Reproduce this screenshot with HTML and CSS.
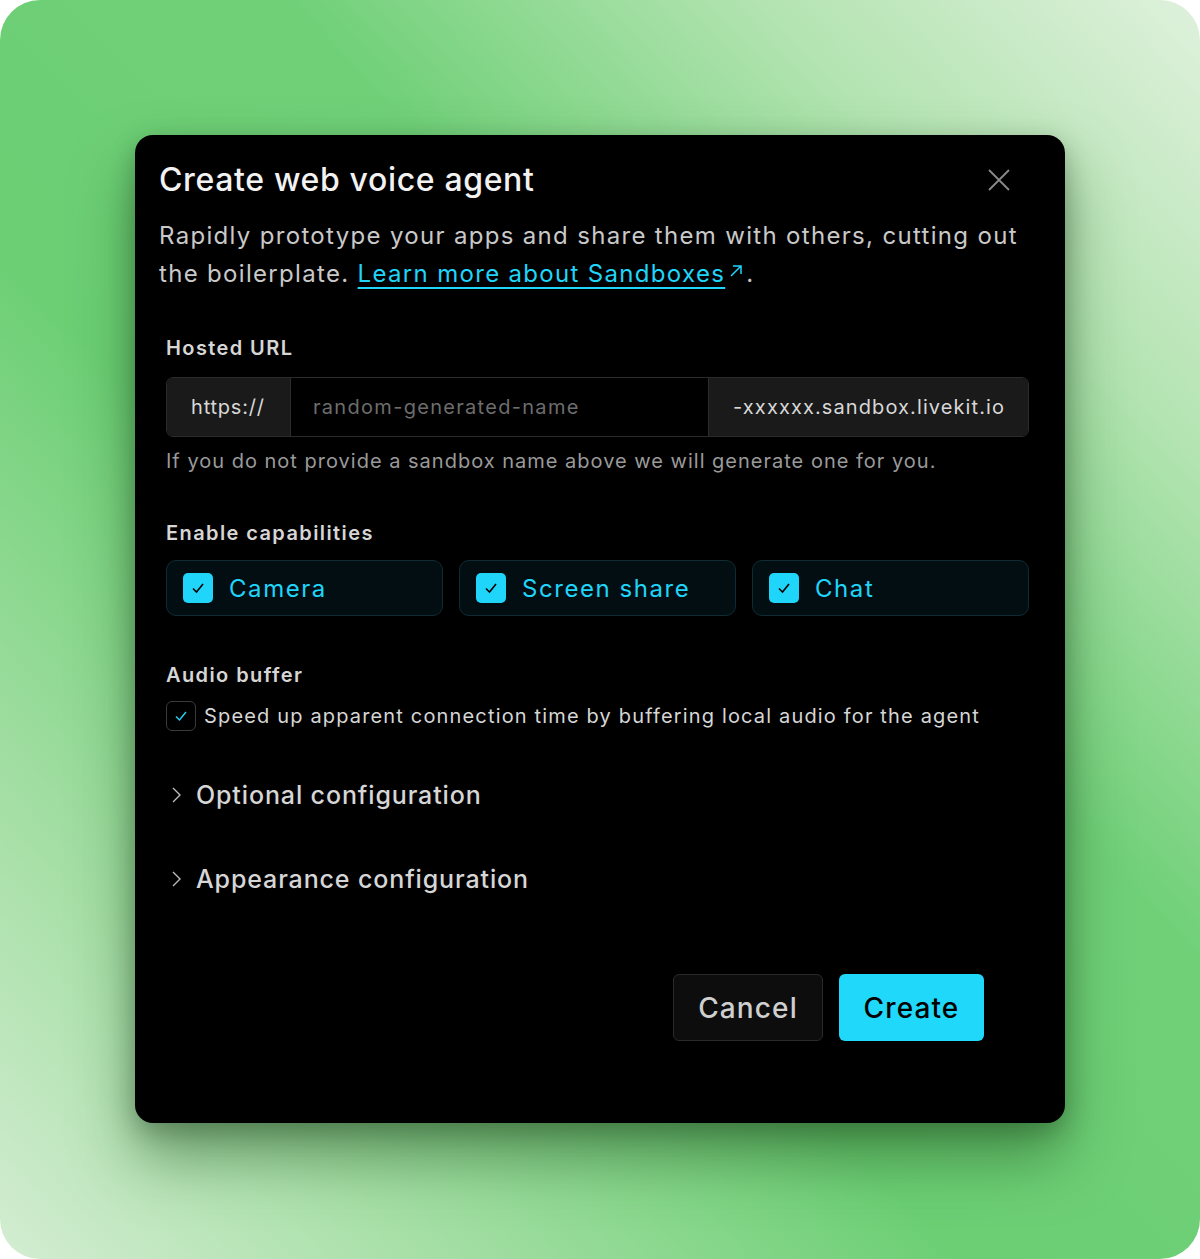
FILE: index.html
```html
<!DOCTYPE html>
<html lang="en">
<head>
    <meta charset="UTF-8">
    <meta name="viewport" content="width=device-width, initial-scale=1.0">
    <title>Create web voice agent</title>
    <link rel="stylesheet" href="styles.css">
</head>
<body>
    <div class="backdrop">
        <div class="dialog">
            <div class="dialog-header">
                <h2>Create web voice agent</h2>
                <button class="close" aria-label="Close">
                    <svg width="24" height="24" viewBox="0 0 24 24" fill="none" stroke="#8a8a8a" stroke-width="1.8">
                        <path d="M2 2L22 22M22 2L2 22"/>
                    </svg>
                </button>
            </div>
            <p class="intro">Rapidly prototype your apps and share them with others, cutting out the boilerplate. <a href="#">Learn more about Sandboxes</a><svg class="ext" width="16" height="16" viewBox="0 0 16 16" fill="none" stroke="#1fd5f9" stroke-width="1.5"><path d="M3 13L13 3M5 3H13V11"/></svg>.</p>

            <div class="section url-section">
                <label class="field-label">Hosted URL</label>
                <div class="url-input">
                    <span class="prefix">https://</span>
                    <input type="text" placeholder="random-generated-name">
                    <span class="suffix">-xxxxxx.sandbox.livekit.io</span>
                </div>
                <div class="hint">If you do not provide a sandbox name above we will generate one for you.</div>
            </div>

            <div class="section caps-section">
                <label class="field-label">Enable capabilities</label>
                <div class="caps">
                    <div class="cap"><span class="box"><svg width="16" height="16" viewBox="0 0 16 16" fill="none" stroke="#000" stroke-width="1.6"><path d="M3 8.5L6.5 12L13 4"/></svg></span>Camera</div>
                    <div class="cap"><span class="box"><svg width="16" height="16" viewBox="0 0 16 16" fill="none" stroke="#000" stroke-width="1.6"><path d="M3 8.5L6.5 12L13 4"/></svg></span>Screen share</div>
                    <div class="cap"><span class="box"><svg width="16" height="16" viewBox="0 0 16 16" fill="none" stroke="#000" stroke-width="1.6"><path d="M3 8.5L6.5 12L13 4"/></svg></span>Chat</div>
                </div>
            </div>

            <div class="section audio-section">
                <label class="field-label">Audio buffer</label>
                <div class="check-row">
                    <span class="small-box"><svg width="16" height="16" viewBox="0 0 16 16" fill="none" stroke="#1fd5f9" stroke-width="1.4"><path d="M3 8.5L6.5 12L13 4"/></svg></span>
                    Speed up apparent connection time by buffering local audio for the agent
                </div>
            </div>

            <div class="collapsible"><svg width="12" height="18" viewBox="0 0 12 18" fill="none" stroke="#bbb" stroke-width="1.4"><path d="M3 2L10 9L3 16"/></svg>Optional configuration</div>
            <div class="collapsible"><svg width="12" height="18" viewBox="0 0 12 18" fill="none" stroke="#bbb" stroke-width="1.4"><path d="M3 2L10 9L3 16"/></svg>Appearance configuration</div>

            <div class="actions">
                <button class="btn cancel">Cancel</button>
                <button class="btn create">Create</button>
            </div>
        </div>
    </div>
</body>
</html>
```

FILE: styles.css
```css
* {
    box-sizing: border-box;
}
body {
    margin: 0;
    background: #fff;
    font-family: Inter, "Liberation Sans", sans-serif;
    letter-spacing: 0.05em;
}
.backdrop {
    height: 1259px;
    border-radius: 40px;
    background: linear-gradient(to top right, #d4edd2 0%, #a6dfa6 18%, #6ccf74 40%, #70d078 62%, #b4e4b2 82%, #dff1dc 100%);
    display: flex;
    justify-content: center;
    padding-top: 135px;
}
.dialog {
    width: 930px;
    height: 988px;
    background: #000;
    border-radius: 18px;
    box-shadow: 0 34px 60px rgba(30, 80, 30, 0.5), 0 8px 24px rgba(0, 0, 0, 0.25);
    padding: 23px 36px 0 24px;
}
.dialog-header {
    display: flex;
    justify-content: space-between;
    align-items: center;
}
h2 {
    margin: 0;
    color: #f2f2f2;
    font-size: 32px;
    font-weight: 500;
    line-height: 44px;
    letter-spacing: 0.02em;
}
.close {
    background: none;
    border: none;
    padding: 0;
    margin-right: 18px;
    width: 24px;
    height: 24px;
    cursor: pointer;
}
.intro {
    margin: 15px 0 0;
    color: #c9c9c9;
    font-size: 24px;
    line-height: 38px;
    letter-spacing: 0.055em;
}
.intro a {
    color: #1fd5f9;
    text-decoration: underline;
    text-underline-offset: 5px;
}
.ext {
    vertical-align: 3px;
    margin: 0 2px 0 3px;
}
.section {
    padding-left: 7px;
}
.field-label {
    display: block;
    color: #d6d6d6;
    font-size: 20px;
    font-weight: 600;
    line-height: 28px;
    letter-spacing: 0.07em;
}
.url-section {
    margin-top: 41px;
}
.url-section .field-label {
    margin-bottom: 15px;
}
.url-input {
    display: flex;
    height: 60px;
    border: 1px solid #2c2c2c;
    border-radius: 7px;
    overflow: hidden;
}
.prefix, .suffix {
    background: #1a1a1a;
    color: #d8d8d8;
    font-size: 20px;
    display: flex;
    align-items: center;
    padding: 0 24px;
}
.prefix {
    width: 124px;
    border-right: 1px solid #2c2c2c;
}
.suffix {
    width: 320px;
    border-left: 1px solid #2c2c2c;
    padding: 0 0 0 24px;
    letter-spacing: 0.055em;
}
.url-input input {
    flex: 1;
    min-width: 0;
    background: #000;
    border: none;
    color: #ddd;
    font-family: inherit;
    font-size: 20px;
    letter-spacing: 0.065em;
    padding: 0 22px;
    outline: none;
}
.url-input input::placeholder {
    color: #6d6d6d;
}
.hint {
    margin-top: 10px;
    color: #9a9a9a;
    font-size: 20px;
    line-height: 28px;
    letter-spacing: 0.05em;
}
.caps-section {
    margin-top: 44px;
}
.caps-section .field-label {
    margin-bottom: 13px;
}
.caps {
    display: grid;
    grid-template-columns: repeat(3, 1fr);
    gap: 16px;
}
.cap {
    height: 56px;
    background: #020e12;
    border: 1px solid #0f2c35;
    border-radius: 10px;
    display: flex;
    align-items: center;
    padding-left: 16px;
    color: #1fd5f9;
    font-size: 24px;
    letter-spacing: 0.065em;
}
.box {
    width: 30px;
    height: 30px;
    background: #1fd5f9;
    border-radius: 5px;
    display: flex;
    align-items: center;
    justify-content: center;
    margin-right: 16px;
}
.audio-section {
    margin-top: 45px;
}
.audio-section .field-label {
    margin-bottom: 12px;
}
.check-row {
    display: flex;
    align-items: center;
    color: #d6d6d6;
    font-size: 20px;
    letter-spacing: 0.058em;
}
.small-box {
    width: 30px;
    height: 30px;
    border: 1px solid #3a3a3a;
    border-radius: 6px;
    display: flex;
    align-items: center;
    justify-content: center;
    margin-right: 8px;
}
.collapsible {
    display: flex;
    align-items: center;
    color: #d6d6d6;
    font-size: 25px;
    font-weight: 500;
    letter-spacing: 0.035em;
    height: 40px;
    padding-left: 7px;
    margin-top: 44px;
}
.collapsible + .collapsible {
    margin-top: 44px;
}
.collapsible svg {
    margin: 0 14px 0 4px;
}
.actions {
    display: flex;
    justify-content: flex-end;
    gap: 16px;
    margin-top: 75px;
    padding-right: 45px;
}
.btn {
    height: 67px;
    border-radius: 6px;
    font-family: inherit;
    font-size: 28px;
    font-weight: 500;
    letter-spacing: 0.04em;
    cursor: pointer;
}
.cancel {
    width: 150px;
    background: #0d0d0d;
    border: 1px solid #2a2a2a;
    color: #cfcfcf;
}
.create {
    width: 145px;
    background: #1fd8fa;
    border: none;
    color: #000;
}
```
